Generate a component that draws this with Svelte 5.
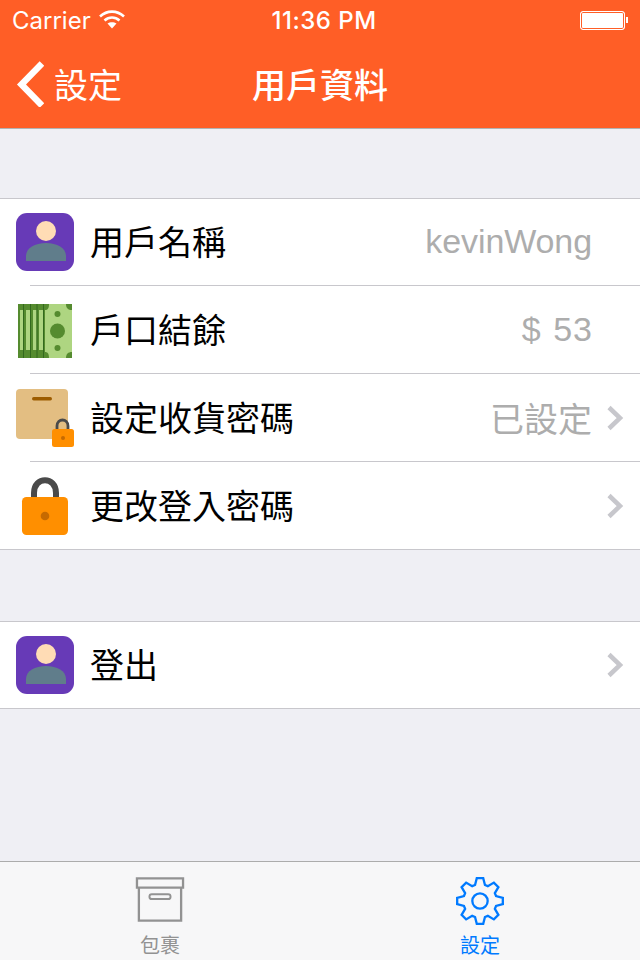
<script>
  const teeth = 8;
  const cx = 25, cy = 25;
  function gearPath() {
    const pts = [];
    for (let i = 0; i < teeth; i++) {
      const a = (i * 2 * Math.PI) / teeth - Math.PI / 2;
      const spread = [[-0.3, 17.5], [-0.14, 24], [0.14, 24], [0.3, 17.5]];
      for (const [d, r] of spread) {
        pts.push(`${(cx + r * Math.cos(a + d)).toFixed(2)} ${(cy + r * Math.sin(a + d)).toFixed(2)}`);
      }
    }
    return 'M' + pts.join('L') + 'Z';
  }
  const gear = gearPath();
</script>

{#snippet person()}
  <svg class="icon" viewBox="0 0 58 58">
    <rect width="58" height="58" rx="11" fill="#673ab7" />
    <circle cx="30" cy="18" r="10" fill="#ffdcb5" />
    <path d="M10 48V43C10 35 19 30 30 30S50 35 50 43V48Z" fill="#607d8b" />
  </svg>
{/snippet}

{#snippet chevron()}
  <svg class="chev" viewBox="0 0 18 26"><path d="M3 2.5L14 13L3 23.500" fill="none" stroke="#c7c7cc" stroke-width="4.500" /></svg>
{/snippet}

<div class="page">
  <header class="top">
    <div class="status">
      <div class="left">
        <span>Carrier</span>
        <svg class="wifi" viewBox="0 0 26 20">
          <path d="M1 7.500C8 1 18 1 25 7.500" fill="none" stroke="#fff" stroke-width="2.600" />
          <path d="M5.500 11.500C10 7.500 16 7.500 20.500 11.500" fill="none" stroke="#fff" stroke-width="2.600" />
          <path d="M13 19.500L8.500 14.500C11 12.700 15 12.700 17.500 14.500Z" fill="#fff" />
        </svg>
      </div>
      <div class="time">11:36 PM</div>
      <div class="battery"><i></i><b></b></div>
    </div>
    <nav class="nav">
      <div class="back">
        <svg class="backicon" viewBox="0 0 30 46"><path d="M28 2.500L7.500 23.500L28 44.500" fill="none" stroke="#fff" stroke-width="6.500" /></svg>
        <span>設定</span>
      </div>
      <div class="title">用戶資料</div>
    </nav>
  </header>

  <section class="group first">
    <div class="row lead">
      {@render person()}
      <span class="label">用戶名稱</span>
      <span class="value end name">kevinWong</span>
    </div>
    <div class="sep"></div>
    <div class="row">
      <svg class="icon" viewBox="0 0 58 58">
        <rect x="2" y="3" width="54" height="54" fill="#558b2f" />
        <rect x="4" y="9" width="3.500" height="40" fill="#aed581" />
        <rect x="10" y="9" width="4" height="40" fill="#aed581" />
        <rect x="17" y="9" width="3.500" height="40" fill="#aed581" />
        <rect x="23" y="9" width="4" height="40" fill="#aed581" />
        <rect x="7" y="3" width="1" height="54" fill="#33691e" />
        <rect x="14" y="3" width="1" height="54" fill="#33691e" />
        <rect x="20.500" y="3" width="1" height="54" fill="#33691e" />
        <rect x="27" y="3" width="1" height="54" fill="#33691e" />
        <path d="M33 3H50C50 7 52 9 56 9V51C52 51 50 53 50 57H33C33 53 32 51 29 51V9C32 9 33 7 33 3Z" fill="#aed581" />
        <circle cx="41.500" cy="30" r="7.500" fill="#558b2f" />
        <circle cx="41.500" cy="13" r="3" fill="#558b2f" />
        <circle cx="41.500" cy="47" r="3" fill="#558b2f" />
      </svg>
      <span class="label">戶口結餘</span>
      <span class="value end money">$ 53</span>
    </div>
    <div class="sep"></div>
    <div class="row">
      <svg class="icon" viewBox="0 0 58 58">
        <rect y="0" width="52" height="50" rx="4" fill="#e3be82" />
        <rect x="16" y="8" width="20" height="3.500" rx="1.700" fill="#9c5c00" />
        <path d="M41 43V37C41 29 52 29 52 37V43" fill="none" stroke="#4a4a4a" stroke-width="2.800" />
        <rect x="36" y="40" width="22" height="18" rx="2.500" fill="#ff8f00" />
        <circle cx="47" cy="49" r="2" fill="#c66a00" />
      </svg>
      <span class="label">設定收貨密碼</span>
      <span class="value">已設定</span>
      {@render chevron()}
    </div>
    <div class="sep"></div>
    <div class="row">
      <svg class="icon" viewBox="0 0 58 58">
        <path d="M18 26V16C18 -1 40 -1 40 16V26" fill="none" stroke="#4a4a4a" stroke-width="6" />
        <rect x="6" y="20" width="46" height="38" rx="4.500" fill="#ff8f00" />
        <circle cx="29" cy="39" r="4.300" fill="#c66a00" />
      </svg>
      <span class="label">更改登入密碼</span>
      <span class="spacer"></span>
      {@render chevron()}
    </div>
  </section>

  <section class="group second">
    <div class="row lead">
      {@render person()}
      <span class="label">登出</span>
      <span class="spacer"></span>
      {@render chevron()}
    </div>
  </section>

  <footer class="tabs">
    <div class="tab">
      <svg class="tabicon" viewBox="0 0 50 50">
        <path d="M1 1.500H49V11H1ZM3 11V45.500H47V11" fill="none" stroke="#929292" stroke-width="2.400" />
        <rect x="14" y="18" width="22" height="5" rx="2.500" fill="none" stroke="#929292" stroke-width="2" />
      </svg>
      <span>包裹</span>
    </div>
    <div class="tab active">
      <svg class="tabicon" viewBox="0 0 50 50">
        <path d={gear} fill="none" stroke="#007aff" stroke-width="2.400" stroke-linejoin="miter" />
        <circle cx="25" cy="25" r="8" fill="none" stroke="#007aff" stroke-width="2.400" />
      </svg>
      <span>設定</span>
    </div>
  </footer>
</div>

<style>
  :global(body) { margin: 0; }
  .page {
    width: 640px;
    height: 960px;
    background: #efeff4;
    display: flex;
    flex-direction: column;
    overflow: hidden;
    font-family: "Liberation Sans", "Noto Sans CJK TC", sans-serif;
  }
  .top {
    height: 128px;
    flex: none;
    background: #ff5e26;
    border-bottom: 1px solid #b2b2b2;
    color: #fff;
  }
  .status {
    height: 40px;
    display: flex;
    align-items: center;
    justify-content: space-between;
    padding: 0 12px;
    font-family: Inter, "Liberation Sans", sans-serif;
    font-size: 24px;
    position: relative;
  }
  .left { display: flex; align-items: center; gap: 8px; width: 180px; }
  .wifi { width: 26px; height: 20px; margin-top: -3px; }
  .time { font-weight: 500; letter-spacing: 0.5px; margin-left: 8px; }
  .battery { display: flex; align-items: center; width: 180px; justify-content: flex-end; }
  .battery i {
    display: block;
    box-sizing: border-box;
    width: 45px;
    height: 19px;
    border: 1px solid #fff;
    border-radius: 3px;
    background: #fff;
    box-shadow: inset 0 0 0 1px #ff5e26;
  }
  .battery b { display: block; width: 2px; height: 6px; background: #fff; margin-left: 1px; }
  .nav {
    height: 88px;
    display: flex;
    align-items: center;
    position: relative;
    margin-top: -1px;
  }
  .back { display: flex; align-items: center; padding-left: 14px; gap: 10px; font-size: 34px; }
  .backicon { width: 30px; height: 46px; margin-top: 1px; }
  .title {
    position: absolute;
    left: 0;
    right: 0;
    text-align: center;
    font-size: 34px;
    font-weight: 500;
  }
  .group {
    background: #fff;
    border-top: 1px solid #c8c7cc;
    border-bottom: 1px solid #c8c7cc;
  }
  .group.first { margin-top: 69px; }
  .group.second { margin-top: 71px; }
  .row {
    height: 87px;
    display: flex;
    align-items: center;
    padding-left: 16px;
    padding-right: 16px;
    box-sizing: border-box;
    font-size: 34px;
    color: #000;
  }
  .row.lead { height: 86px; }
  .sep { height: 1px; margin-left: 30px; background: #c8c7cc; }
  .icon { width: 58px; height: 58px; flex: none; margin-right: 16px; }
  .label { flex: none; margin-top: -3px; }
  .value { margin-left: auto; color: #adadad; margin-top: -1px; }
  .value.end { margin-right: 32px; }
  .name { letter-spacing: -0.1px; }
  .money { letter-spacing: 1px; word-spacing: 1px; }
  .value.money { margin-right: 31px; }
  .spacer { margin-left: auto; }
  .chev { width: 18px; height: 26px; flex: none; margin-left: 14px; }
  .tabs {
    margin-top: auto;
    height: 99px;
    flex: none;
    box-sizing: border-box;
    border-top: 1px solid #acacac;
    background: #f7f7f8;
    display: flex;
  }
  .tab {
    flex: 1;
    display: flex;
    flex-direction: column;
    align-items: center;
    color: #929292;
    font-size: 20px;
    padding-top: 15px;
  }
  .tab span { line-height: 28px; margin-top: 7px; }
  .tab.active { color: #007aff; }
  .tabicon { width: 50px; height: 50px; }
</style>
